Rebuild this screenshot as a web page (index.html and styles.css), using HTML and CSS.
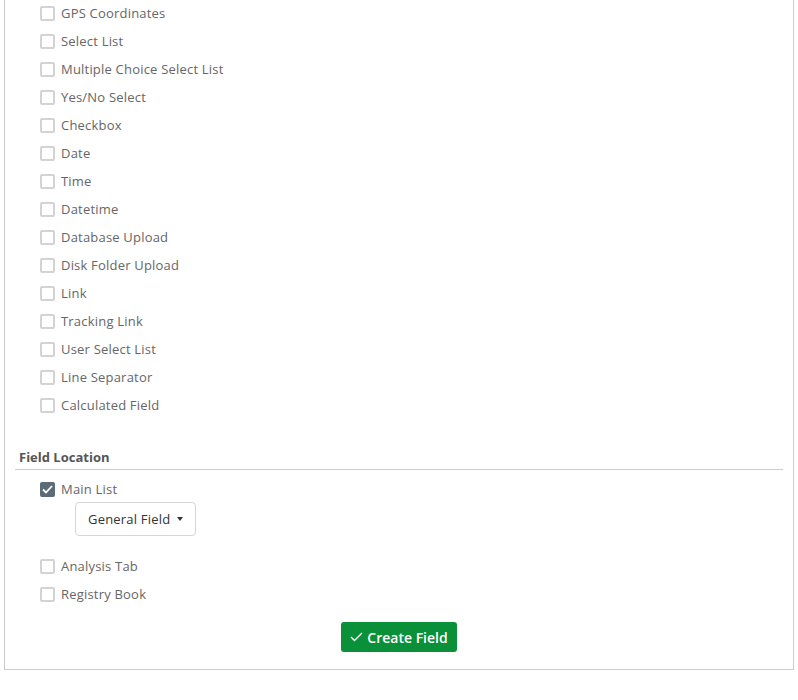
FILE: index.html
```html
<!DOCTYPE html>
<html lang="en">
<head>
  <meta charset="UTF-8">
  <meta name="viewport" content="width=device-width, initial-scale=1.0">
  <title>Create Field</title>
  <link rel="stylesheet" href="styles.css">
</head>
<body>
  <div class="panel">
    <ul class="checks first">
      <li><span class="box"></span>GPS Coordinates</li>
      <li><span class="box"></span>Select List</li>
      <li><span class="box"></span>Multiple Choice Select List</li>
      <li><span class="box"></span>Yes/No Select</li>
      <li><span class="box"></span>Checkbox</li>
      <li><span class="box"></span>Date</li>
      <li><span class="box"></span>Time</li>
      <li><span class="box"></span>Datetime</li>
      <li><span class="box"></span>Database Upload</li>
      <li><span class="box"></span>Disk Folder Upload</li>
      <li><span class="box"></span>Link</li>
      <li><span class="box"></span>Tracking Link</li>
      <li><span class="box"></span>User Select List</li>
      <li><span class="box"></span>Line Separator</li>
      <li><span class="box"></span>Calculated Field</li>
    </ul>

    <h4 class="section-title">Field Location</h4>

    <ul class="checks location">
      <li>
        <span class="box checked">
          <svg width="11" height="9" viewBox="0 0 11 9"><path d="M1 4.5 L4 7.5 L10 1" fill="none" stroke="#fff" stroke-width="1.8"/></svg>
        </span>Main List
      </li>
    </ul>
    <div class="dropdown-wrap">
      <button class="dropdown">General Field <span class="caret"></span></button>
    </div>
    <ul class="checks">
      <li><span class="box"></span>Analysis Tab</li>
      <li><span class="box"></span>Registry Book</li>
    </ul>

    <div class="actions">
      <button class="btn-create">
        <svg width="13" height="10" viewBox="0 0 13 10"><path d="M1 5 L4.5 8.5 L12 1" fill="none" stroke="#fff" stroke-width="1.4"/></svg>
        Create Field
      </button>
    </div>
  </div>
</body>
</html>
```

FILE: styles.css
```css
body {
  margin: 0;
  font-family: "Open Sans", "Noto Sans", sans-serif;
  font-size: 13px;
  letter-spacing: 0.2px;
  color: #666;
  background: #fff;
}
.panel {
  width: 790px;
  margin-left: 4px;
  border: 1px solid #ccc;
  border-top: none;
  padding: 0 10px 17px 10px;
  box-sizing: border-box;
}
.checks {
  list-style: none;
  margin: 0;
  padding: 0 0 0 25px;
}
.checks.first {
  margin-top: -1px;
}
.checks li {
  display: flex;
  align-items: center;
  height: 28px;
}
.box {
  display: inline-flex;
  align-items: center;
  justify-content: center;
  width: 15px;
  height: 15px;
  box-sizing: border-box;
  border: 2px solid #d3d3d3;
  border-radius: 2px;
  margin-right: 6px;
  flex-shrink: 0;
}
.box.checked {
  background: #5b6b78;
  border-color: #5b6b78;
}
.section-title {
  margin: 28px 0 0 0;
  padding: 0 0 2px 4px;
  font-size: 13px;
  line-height: 20px;
  font-weight: 700;
  letter-spacing: 0;
  color: #555;
  border-bottom: 1px solid #ccc;
}
.checks.location {
  margin-top: 5px;
}
.dropdown-wrap {
  padding-left: 60px;
  margin-top: -1px;
}
.dropdown {
  height: 34px;
  padding: 0 12px;
  background: #fff;
  border: 1px solid #d6d6d6;
  border-radius: 4px;
  font-family: inherit;
  font-size: 13px;
  letter-spacing: 0.2px;
  color: #333;
  display: inline-flex;
  align-items: center;
}
.caret {
  display: inline-block;
  margin-left: 7px;
  border-top: 4px solid #333;
  border-left: 3.5px solid transparent;
  border-right: 3.5px solid transparent;
}
.dropdown-wrap + .checks {
  margin-top: 16px;
}
.actions {
  text-align: center;
  margin-top: 14px;
}
.btn-create {
  height: 30px;
  padding: 0 9px;
  background: #0a9038;
  border: none;
  border-radius: 3px;
  color: #fff;
  font-family: inherit;
  font-size: 14px;
  font-weight: 600;
  display: inline-flex;
  align-items: center;
  gap: 4px;
}
```
